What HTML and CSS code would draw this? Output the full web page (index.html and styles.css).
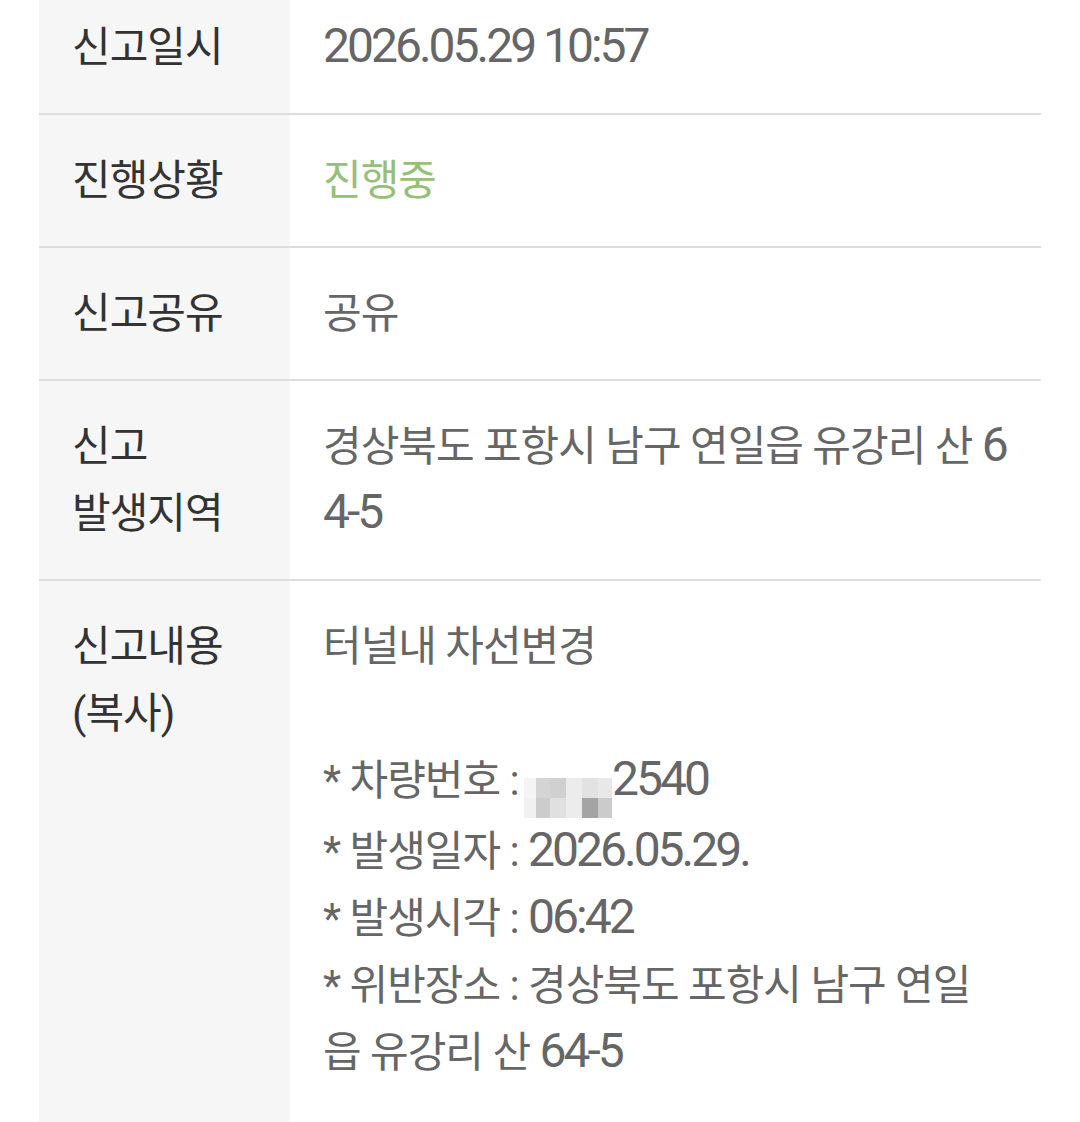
FILE: index.html
```html
<!DOCTYPE html>
<html lang="ko">
<head>
<meta charset="utf-8">
<title>신고 상세</title>
<link rel="stylesheet" href="styles.css">
</head>
<body>
<div class="detail">
  <div class="row">
    <div class="th">신고일시</div>
    <div class="td"><span class="num">2026.05.29 10:57</span></div>
  </div>
  <div class="row">
    <div class="th">진행상황</div>
    <div class="td status">진행중</div>
  </div>
  <div class="row">
    <div class="th">신고공유</div>
    <div class="td">공유</div>
  </div>
  <div class="row">
    <div class="th">신고<br>발생지역</div>
    <div class="td">경상북도 포항시 남구 연일읍 유강리 산 <span class="num">64-5</span></div>
  </div>
  <div class="row last">
    <div class="th">신고내용<br>(복사)</div>
    <div class="td">
      <p>터널내 차선변경</p>
      <p class="blank">&nbsp;</p>
      <p>* 차량번호 : <span class="mosaic"><i class="m1"></i><i class="m2"></i><i class="m3"></i><i class="m4"></i><i class="m5"></i><i class="m6"></i><i class="m7"></i><i class="m8"></i><i class="m9"></i><i class="m10"></i><i class="m11"></i><i class="m12"></i></span><span class="num">2540</span></p>
      <p>* 발생일자 : <span class="num">2026.05.29.</span></p>
      <p>* 발생시각 : <span class="num">06:42</span></p>
      <p>* 위반장소 : 경상북도 포항시 남구 연일<br>읍 유강리 산 <span class="num">64-5</span></p>
    </div>
  </div>
</div>
</body>
</html>
```

FILE: styles.css
```css
html, body {
  margin: 0;
  padding: 0;
  background: #ffffff;
}

body {
  overflow: hidden;
}

.detail {
  width: 1002px;
  margin: -18px 0 0 39px;
  font-family: Roboto, "Noto Sans CJK KR", sans-serif;
  font-size: 42px;
  line-height: 67px;
  letter-spacing: -1px;
  word-spacing: 0;
}

.row {
  display: grid;
  grid-template-columns: 251px 1fr;
  border-bottom: 2px solid #dddddd;
}

.row.last {
  border-bottom: none;
  min-height: 600px;
}

.th {
  background: #f6f6f6;
  color: #333333;
  padding: 32px 20px 32px 33px;
}

.td {
  color: #666666;
  padding: 32px 18px 32px 33px;
  word-break: break-all;
}

.td p {
  margin: 0;
}

.status {
  color: #94c078;
}

.num {
  font-size: 48px;
  letter-spacing: -3px;
  word-spacing: 0;
  line-height: 1;
}

.mosaic {
  display: inline-grid;
  grid-template-columns: 12px 14px 16px 16px 16px 14px;
  grid-template-rows: 20px 20px;
  vertical-align: -3px;
  margin: 0 0 0 -4px;
  filter: blur(0.6px);
}

.mosaic i {
  display: block;
}

.m1 { background: #f4f4f4; }
.m2 { background: #d4d4d4; }
.m3 { background: #d0d0d0; }
.m4 { background: #ececec; }
.m5 { background: #e2e2e2; }
.m6 { background: #e8e8e8; }
.m7 { background: #f1f1f1; }
.m8 { background: #cccccc; }
.m9 { background: #e0e0e0; }
.m10 { background: #ececec; }
.m11 { background: #a4a4a4; }
.m12 { background: #cbcbcb; }
```
